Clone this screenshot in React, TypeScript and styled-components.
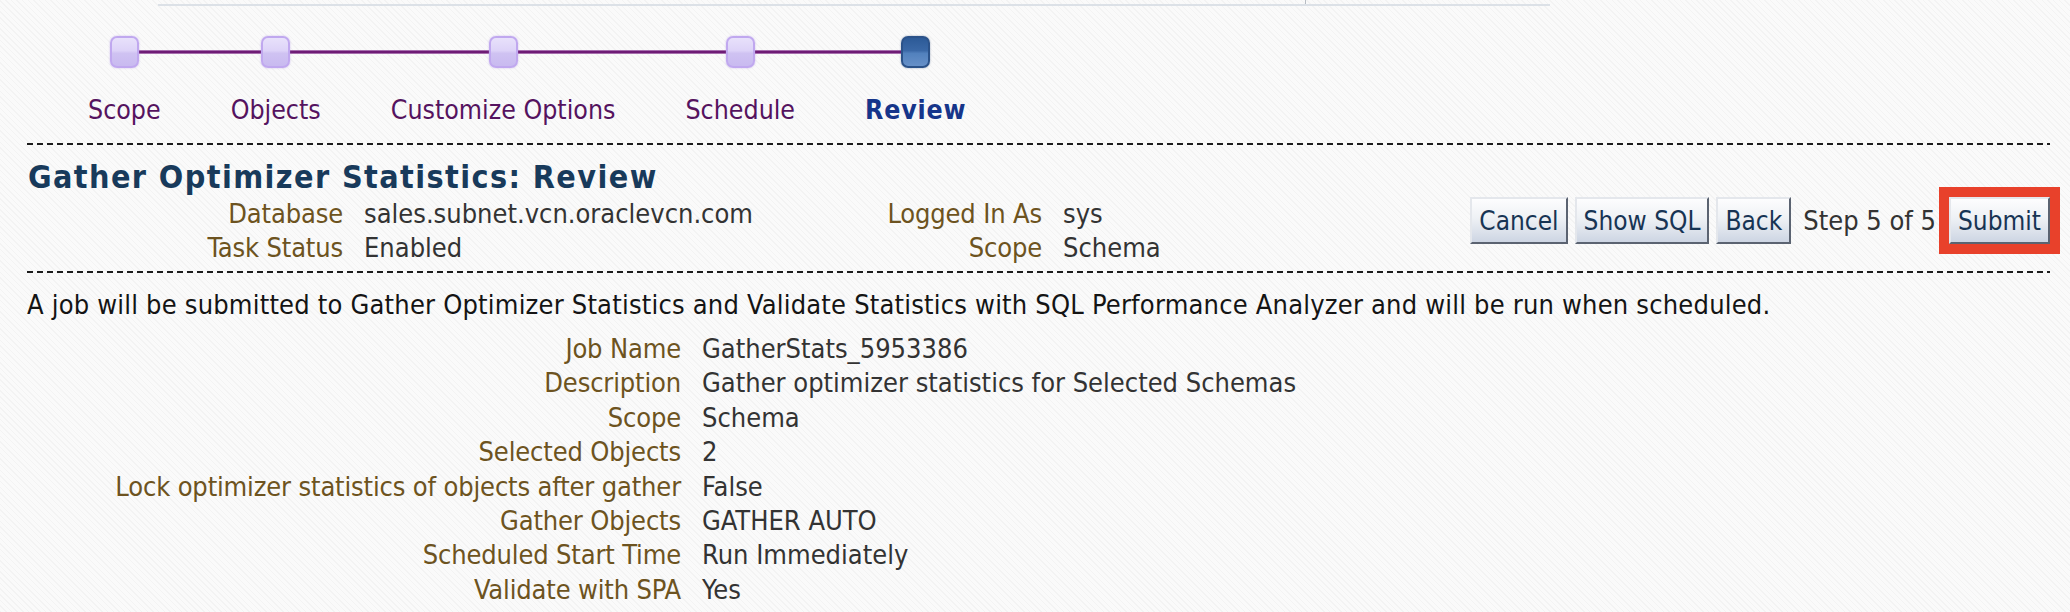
import React from "react";
import styled, { createGlobalStyle } from "styled-components";

const GlobalStyle = createGlobalStyle`
  html, body { margin: 0; padding: 0; }
  body {
    width: 2070px;
    height: 612px;
    overflow: hidden;
    background-color: #f8f8f8;
    background-image: repeating-linear-gradient(45deg, #f3f3f3 0 1px, #fafafa 1px 4px);
    font-family: "DejaVu Sans Condensed", "DejaVu Sans", sans-serif;
    font-stretch: condensed;
    font-size: 27px;
  }
`;

const Page = styled.div`
  width: 2070px;
  height: 612px;
  overflow: hidden;
`;

const TopRule = styled.div`
  position: relative;
  margin: 4px 0 0 158px;
  width: 1392px;
  height: 2px;
  background: #dce1e7;
  &::after {
    content: "";
    position: absolute;
    left: 1147px;
    top: -4px;
    width: 1px;
    height: 4px;
    background: #b7bcc3;
  }
`;

const Train = styled.div`
  display: flex;
  margin: 30px 0 0 53px;
`;

const Stop = styled.div<{ $first?: boolean; $last?: boolean }>`
  position: relative;
  display: flex;
  flex-direction: column;
  align-items: center;
  padding: 0 35px;
  &::before,
  &::after {
    content: "";
    position: absolute;
    top: 14px;
    height: 4px;
    background: linear-gradient(#cfa9d6, #6e1c75 30%, #6e1c75 70%, #cfa9d6);
  }
  &::before {
    left: 0;
    right: 50%;
    display: ${(p) => (p.$first ? "none" : "block")};
  }
  &::after {
    left: 50%;
    right: 0;
    display: ${(p) => (p.$last ? "none" : "block")};
  }
`;

const Node = styled.div<{ $current?: boolean }>`
  position: relative;
  z-index: 1;
  width: 29px;
  height: 32px;
  box-sizing: border-box;
  border-radius: 7px;
  border: 2px solid ${(p) => (p.$current ? "#2b5289" : "#c0a8ef")};
  background: ${(p) =>
    p.$current
      ? "linear-gradient(#2c5a97, #3a68a6 45%, #5281bd 55%, #6690c8)"
      : "linear-gradient(#e8e1fb, #ddd3f8 45%, #cfc2f2 55%, #c9baf0)"};
  box-shadow: 0 0 2px ${(p) => (p.$current ? "rgba(40,70,120,0.5)" : "rgba(170,140,230,0.6)")};
`;

const StopLabel = styled.div<{ $current?: boolean }>`
  margin-top: 25px;
  font-size: 26.5px;
  line-height: 34px;
  white-space: nowrap;
  color: ${(p) => (p.$current ? "#16358a" : "#55135f")};
  font-weight: ${(p) => (p.$current ? "bold" : "normal")};
  letter-spacing: ${(p) => (p.$current ? "0.8px" : "0")};
`;

const DashedRule = styled.div<{ $top: number }>`
  height: 2px;
  margin: ${(p) => p.$top}px 20px 0 27px;
  background: repeating-linear-gradient(to right, #1c1c1c 0 6px, transparent 6px 10px);
`;

const Header = styled.div`
  display: grid;
  grid-template-columns: 1fr auto;
  margin: 12px 20px 0 28px;
`;

const Title = styled.h1`
  grid-column: 1 / -1;
  margin: 0;
  font-size: 32px;
  line-height: 40px;
  font-weight: bold;
  letter-spacing: 1.4px;
  color: #183a5b;
  white-space: nowrap;
`;

const InfoGrid = styled.div`
  display: grid;
  grid-template-columns: 315px 430px 227px auto;
  column-gap: 21px;
  line-height: 34px;
`;

const Label = styled.div`
  text-align: right;
  color: #6d5320;
  letter-spacing: -0.15px;
  white-space: nowrap;
`;

const Value = styled.div`
  color: #333333;
  white-space: nowrap;
`;

const Actions = styled.div`
  display: flex;
  align-items: center;
  align-self: start;
`;

const Button = styled.button<{ $marked?: boolean }>`
  height: 47px;
  box-sizing: border-box;
  padding: 0 7px;
  margin-left: 7px;
  font-family: inherit;
  font-stretch: condensed;
  font-size: 26px;
  color: #173454;
  border: 2px solid;
  border-color: #e4e7ec #5b6371 #5b6371 #e4e7ec;
  background: linear-gradient(#fdfdfe, #eef1f5 45%, #cdd5e3);
  outline: ${(p) => (p.$marked ? "10px solid #e8412b" : "none")};
  outline-offset: 0;
  cursor: pointer;
`;

const StepText = styled.span`
  margin: 0 6px 0 12px;
  color: #333333;
  white-space: nowrap;
`;

const Details = styled.div`
  margin: 15px 20px 0 27px;
`;

const Sentence = styled.p`
  margin: 0;
  line-height: 34px;
  color: #141414;
  letter-spacing: 0.2px;
  white-space: nowrap;
`;

const DetailGrid = styled.div`
  display: grid;
  grid-template-columns: 654px auto;
  column-gap: 21px;
  line-height: 34.4px;
  margin-top: 10px;
`;

const steps = ["Scope", "Objects", "Customize Options", "Schedule", "Review"];

const details: [string, string][] = [
  ["Job Name", "GatherStats_5953386"],
  ["Description", "Gather optimizer statistics for Selected Schemas"],
  ["Scope", "Schema"],
  ["Selected Objects", "2"],
  ["Lock optimizer statistics of objects after gather", "False"],
  ["Gather Objects", "GATHER AUTO"],
  ["Scheduled Start Time", "Run Immediately"],
  ["Validate with SPA", "Yes"],
];

export default function App() {
  return (
    <Page>
      <GlobalStyle />
      <TopRule />
      <Train>
        {steps.map((s, i) => {
          const current = i === steps.length - 1;
          return (
            <Stop key={s} $first={i === 0} $last={current}>
              <Node $current={current} />
              <StopLabel $current={current}>{s}</StopLabel>
            </Stop>
          );
        })}
      </Train>
      <DashedRule $top={16} />
      <Header>
        <Title>Gather Optimizer Statistics: Review</Title>
        <InfoGrid>
          <Label>Database</Label>
          <Value>sales.subnet.vcn.oraclevcn.com</Value>
          <Label>Logged In As</Label>
          <Value>sys</Value>
          <Label>Task Status</Label>
          <Value>Enabled</Value>
          <Label>Scope</Label>
          <Value>Schema</Value>
        </InfoGrid>
        <Actions>
          <Button>Cancel</Button>
          <Button>Show SQL</Button>
          <Button>Back</Button>
          <StepText>Step 5 of 5</StepText>
          <Button $marked>Submit</Button>
        </Actions>
      </Header>
      <DashedRule $top={6} />
      <Details>
        <Sentence>
          A job will be submitted to Gather Optimizer Statistics and Validate Statistics with SQL
          Performance Analyzer and will be run when scheduled.
        </Sentence>
        <DetailGrid>
          {details.map(([k, v]) => (
            <React.Fragment key={k}>
              <Label>{k}</Label>
              <Value>{v}</Value>
            </React.Fragment>
          ))}
        </DetailGrid>
      </Details>
    </Page>
  );
}
